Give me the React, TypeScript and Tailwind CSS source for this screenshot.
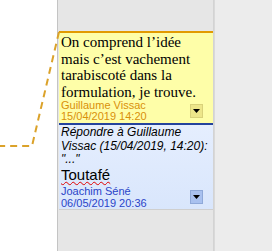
import React from 'react';

/**
 * Comment sidebar: an anchored yellow note and a blue reply
 */

function DropButton({ tone }: { tone: 'yellow' | 'blue' }) {
  const cls =
    tone === 'yellow'
      ? 'bg-[#ede68a] border-[#d9d27a]'
      : 'bg-[#a9c1ef] border-[#8fa9d9]';
  return (
    <div className={`w-[13px] h-[14px] border ${cls} flex items-center justify-center shrink-0`}>
      <svg width="7" height="4" viewBox="0 0 7 4">
        <polygon points="0,0 7,0 3.5,4" fill="#000" />
      </svg>
    </div>
  );
}

export default function App() {
  return (
    <div className="relative w-[272px] h-[251px] flex bg-white overflow-hidden">
      {/* Document page */}
      <div className="w-[57px] bg-white" />
      <div className="w-px bg-[#c4c4c4]" />

      {/* Comment column */}
      <div className="w-[155px] bg-[#e6e6e6] pt-[31px] pl-px">
        <div className="bg-[#fefea8] border-t-2 border-[#e29a00] pl-[2px] pr-[10px]">
          <p
            className="text-[15px] leading-[16.5px] text-black pt-[1px] whitespace-nowrap"
            style={{ fontFamily: '"Liberation Serif", serif' }}
          >
            On comprend l’idée
            <br />
            mais c’est vachement
            <br />
            tarabiscoté dans la
            <br />
            formulation, je trouve.
          </p>
          <div className="flex items-center justify-between pb-[1px]">
            <div
              className="text-[11px] leading-[11px] text-[#d9900a]"
              style={{ fontFamily: '"Liberation Sans", sans-serif' }}
            >
              <div>Guillaume Vissac</div>
              <div>15/04/2019 14:20</div>
            </div>
            <DropButton tone="yellow" />
          </div>
        </div>

        <div
          className="bg-gradient-to-b from-[#e5eefe] to-[#d9e6fc] border-t-2 border-[#24439c] pl-[2px] pr-[10px] border-b border-b-[#cfcfcf]"
          style={{ fontFamily: '"Liberation Sans", sans-serif' }}
        >
          <p className="text-[12px] leading-[13.5px] italic text-black pt-[1px] whitespace-nowrap">
            Répondre à Guillaume
            <br />
            Vissac (15/04/2019, 14:20):
            <br />
            "..."
          </p>
          <p className="text-[15px] leading-[15px] text-black">
            <span className="underline decoration-wavy decoration-[#e00000] decoration-1 underline-offset-[1px]">
              Toutafé
            </span>
          </p>
          <div className="flex items-center justify-between pt-[3px]">
            <div className="text-[11px] leading-[12px] text-[#2a44c8]">
              <div>Joachim Séné</div>
              <div>06/05/2019 20:36</div>
            </div>
            <DropButton tone="blue" />
          </div>
        </div>
      </div>

      {/* Column edge */}
      <div className="w-[2px] bg-gradient-to-r from-[#d0d0d0] to-[#dcdcdc]" />
      <div className="flex-1 bg-[#ececec]" />

      {/* Anchor line from the note to the text */}
      <svg className="absolute left-0 top-0 pointer-events-none" width="272" height="251">
        <polyline
          points="59,32 32,146 0,146"
          fill="none"
          stroke="#dba22a"
          strokeWidth="2"
          strokeDasharray="7,5"
        />
      </svg>
    </div>
  );
}
